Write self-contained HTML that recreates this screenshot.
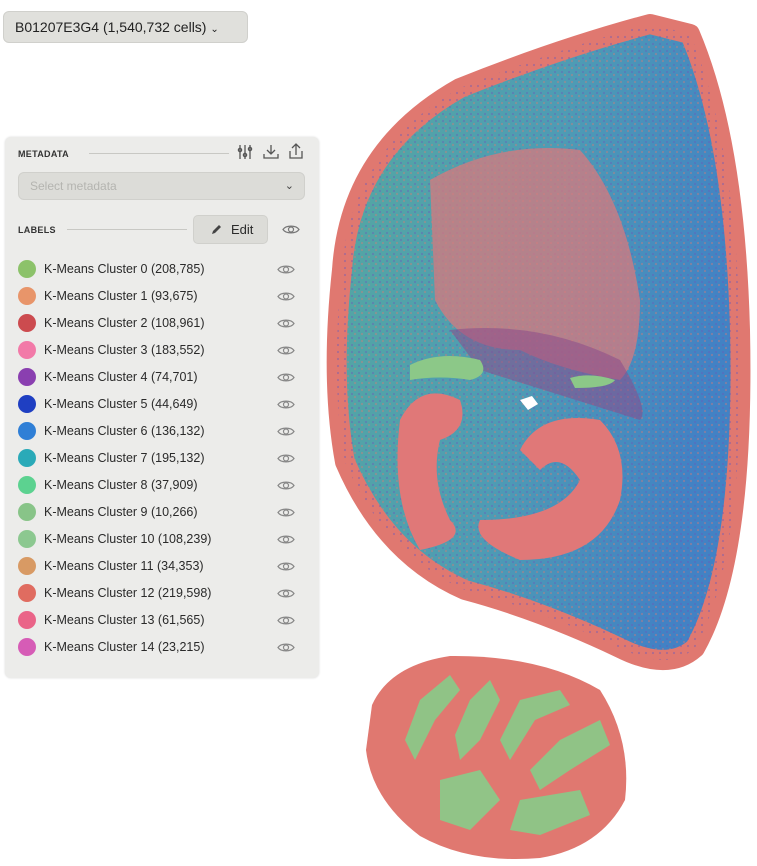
<!DOCTYPE html>
<html><head><meta charset="utf-8"><style>
body{margin:0;width:757px;height:866px;background:#fff;position:relative;overflow:hidden;font-family:"Liberation Sans",sans-serif;color:#2a2a2a}
.top{position:absolute;left:3px;top:11px;width:245px;height:32px;background:#e0e0dc;border:1px solid #d0d0cc;border-radius:6px;box-sizing:border-box;font-size:14px;line-height:30px;padding-left:11px;color:#222}
.panel{position:absolute;left:5px;top:137px;width:314px;height:541px;background:#ececea;border-radius:6px;box-shadow:0 0 2px rgba(0,0,0,.15)}
.hdr{position:absolute;font-size:9px;font-weight:bold;letter-spacing:.3px;color:#333}
.line{position:absolute;height:1px;background:#c8c8c4}
.sel{position:absolute;left:13px;top:35px;width:287px;height:28px;background:#dcdcd8;border:1px solid #d0d0cc;border-radius:6px;box-sizing:border-box;font-size:12px;color:#b4b4b0;line-height:26px;padding-left:11px}
.edit{position:absolute;left:188px;top:78px;width:75px;height:29px;background:#dcdcd8;border:1px solid #d0d0cc;border-radius:5px;box-sizing:border-box;font-size:13px;line-height:27px;padding-left:37px}
.row{position:absolute;left:13px;height:18px;font-size:12.5px;line-height:18px}
.row i{position:absolute;left:0;top:0;width:18px;height:18px;border-radius:50%}
.row span{position:absolute;left:26px;white-space:nowrap}
.eye{position:absolute}
</style></head><body>
<div class="top">B01207E3G4 (1,540,732 cells) <span style="font-size:10px">&#8964;</span></div>
<div class="panel">
<div class="hdr" style="left:13px;top:12px">METADATA</div>
<div class="line" style="left:84px;top:16px;width:140px"></div>
<svg style="position:absolute;left:232px;top:6px" width="70" height="18" fill="none" stroke="#555" stroke-width="1.3">
<path d="M3 2v14M8 2v14M13 2v14"/><circle cx="3" cy="7" r="1.6"/><circle cx="8" cy="12" r="1.6"/><circle cx="13" cy="6" r="1.6"/>
<path d="M34 2v9M30 7l4 4 4-4M27 11v4h14v-4"/>
<path d="M59 12V2M55 5l4-4 4 4M53 8v7h12V8"/></svg>
<div class="sel">Select metadata<span style="position:absolute;right:10px;top:0;color:#444;font-size:11px">&#8964;</span></div>
<div class="hdr" style="left:13px;top:88px">LABELS</div>
<div class="line" style="left:62px;top:92px;width:120px"></div>
<div class="edit"><svg style="position:absolute;left:16px;top:8px" width="12" height="12"><path d="M2 10l1-3 6-6 2 2-6 6z" fill="#444"/></svg>Edit</div>
<svg class="eye" style="left:277px;top:87px" width="18" height="11" fill="none" stroke="#777" stroke-width="1.2"><path d="M1 5.5C4 1 14 1 17 5.5 14 10 4 10 1 5.5z"/><circle cx="9" cy="5.5" r="2.5"/></svg>
</div>
<div id="rows"></div>
<script>
var d=[["#8cc26a","0 (208,785)"],["#e8956a","1 (93,675)"],["#cc4b4f","2 (108,961)"],["#f27aa8","3 (183,552)"],["#8a3fb0","4 (74,701)"],["#1f3fc2","5 (44,649)"],["#2f7fd6","6 (136,132)"],["#2aaab8","7 (195,132)"],["#5cd290","8 (37,909)"],["#88c488","9 (10,266)"],["#8cc890","10 (108,239)"],["#d89a64","11 (34,353)"],["#e06c60","12 (219,598)"],["#ea6488","13 (61,565)"],["#d65cb6","14 (23,215)"]];
var h="";d.forEach(function(r,i){var y=260+i*27;h+='<div class="row" style="left:18px;top:'+y+'px"><i style="background:'+r[0]+'"></i><span>K-Means Cluster '+r[1]+'</span></div><svg class="eye" style="left:277px;top:'+(y+4)+'px" width="18" height="11" fill="none" stroke="#888" stroke-width="1.2"><path d="M1 5.5C4 1 14 1 17 5.5 14 10 4 10 1 5.5z"/><circle cx="9" cy="5.5" r="2.5"/></svg>';});
document.getElementById("rows").innerHTML=h;
</script>
<svg style="position:absolute;left:0;top:0" width="757" height="866">
<defs>
<linearGradient id="g1" x1="0" y1="0" x2="1" y2="0.3"><stop offset="0" stop-color="#55a8a0"/><stop offset="0.55" stop-color="#4e9cb4"/><stop offset="1" stop-color="#4282c4"/></linearGradient>
<pattern id="st" width="7" height="7" patternUnits="userSpaceOnUse"><circle cx="2" cy="2" r="1.1" fill="#6a5ab8" opacity=".45"/><circle cx="5" cy="5" r="1.1" fill="#e07870" opacity=".4"/></pattern>
</defs>
<path d="M342 270Q350 150 460 88Q560 48 650 24L690 34Q735 140 740 330Q745 560 695 648Q668 672 620 648Q540 610 465 590Q385 555 345 462Q330 380 342 270Z" fill="url(#g1)" stroke="#e07870" stroke-width="20" stroke-linejoin="round"/>
<path d="M342 270Q350 150 460 88Q560 48 650 24L690 34Q735 140 740 330Q745 560 695 648Q668 672 620 648Q540 610 465 590Q385 555 345 462Q330 380 342 270Z" fill="url(#st)"/>
<path d="M430 180Q500 140 580 150Q625 200 640 300Q640 360 620 380Q560 370 520 350Q460 350 435 300Z" fill="#d77a7e" opacity=".75"/>
<path d="M450 330Q540 320 620 360Q650 410 640 420Q560 395 480 370Z" fill="#8a4a8a" opacity=".55"/>
<path d="M410 365Q440 350 480 360 490 375 470 380 440 375 410 380Z" fill="#8cc888"/>
<path d="M570 378Q590 372 615 380 610 388 575 388Z" fill="#8cc888"/>
<path d="M400 420Q420 380 460 400 470 430 440 440 430 480 450 520 470 540 420 550 390 500 400 420Z" fill="#e07878"/>
<path d="M520 450Q540 410 600 420 630 450 620 500 600 560 520 560 470 540 480 520 560 520 580 480 560 450 540 470Z" fill="#e07878"/>
<path d="M520 400l12-4 6 8-10 6z" fill="#fff"/>
<path d="M372 705Q390 665 450 656Q540 655 600 690Q632 740 625 800Q600 848 540 858Q470 864 420 836Q372 800 366 750Z" fill="#e07870"/>
<g fill="#8cc888" opacity=".95">
<path d="M420 700L450 675 460 690 435 720 415 760 405 740Z"/>
<path d="M470 700L490 680 500 700 480 740 460 760 455 735Z"/>
<path d="M520 700L560 690 570 705 535 720 510 760 500 740Z"/>
<path d="M560 740L600 720 610 745 570 770 540 790 530 770Z"/>
<path d="M440 780L480 770 500 800 470 830 440 820Z"/>
<path d="M520 800L580 790 590 815 540 835 510 830Z"/>
</g>
</svg>
</body></html>
